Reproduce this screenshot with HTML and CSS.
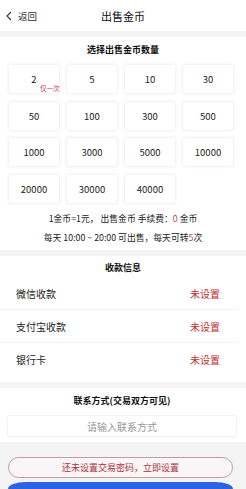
FILE: index.html
```html
<!DOCTYPE html>
<html lang="zh">
<head>
<meta charset="utf-8">
<link rel="stylesheet" href="styles.css">
</head>
<body>
<div class="page">
  <header class="topbar">
    <div class="back">
      <svg class="chev" width="6" height="10" viewBox="0 0 6 10"><path d="M5 1 L1 5 L5 9" fill="none" stroke="#333" stroke-width="1.1"/></svg>
      <span>返回</span>
    </div>
    <div class="title">出售金币</div>
    <div></div>
  </header>

  <section class="card amount">
    <div class="sec-title">选择出售金币数量</div>
    <div class="grid">
      <div class="cell">2<span class="once">仅一次</span></div>
      <div class="cell">5</div>
      <div class="cell">10</div>
      <div class="cell">30</div>
      <div class="cell">50</div>
      <div class="cell">100</div>
      <div class="cell">300</div>
      <div class="cell">500</div>
      <div class="cell">1000</div>
      <div class="cell">3000</div>
      <div class="cell">5000</div>
      <div class="cell">10000</div>
      <div class="cell">20000</div>
      <div class="cell">30000</div>
      <div class="cell">40000</div>
    </div>
    <p class="info first">1金币=1元， 出售金币 手续费：<em>0</em> 金币</p>
    <p class="info">每天 10:00 ~ 20:00 可出售，每天可转<em>5</em>次</p>
  </section>

  <section class="card pay">
    <div class="sec-title">收款信息</div>
    <div class="row"><span>微信收款</span><span class="unset">未设置</span></div>
    <div class="row"><span>支付宝收款</span><span class="unset">未设置</span></div>
    <div class="row"><span>银行卡</span><span class="unset">未设置</span></div>
  </section>

  <section class="card contact">
    <div class="sec-title">联系方式(交易双方可见)</div>
    <div class="input">请输入联系方式</div>
  </section>

  <footer class="actions">
    <div class="btn-outline">还未设置交易密码，立即设置</div>
    <div class="btn-blue"></div>
  </footer>
</div>
</body>
</html>
```

FILE: styles.css
```css
* { box-sizing: border-box; margin: 0; padding: 0; }
html, body { width: 246px; height: 489px; overflow: hidden; }
body {
  background: #f4f4f4;
  font-family: "Noto Sans CJK SC", "Noto Sans", sans-serif;
  color: #222;
}
.page { display: flex; flex-direction: column; }

.topbar {
  height: 31px;
  background: #fff;
  display: grid;
  grid-template-columns: 1fr auto 1fr;
  align-items: center;
}
.back {
  display: flex;
  align-items: center;
  gap: 6px;
  padding-left: 6px;
  font-size: 9.5px;
  color: #333;
}
.title { font-size: 11px; color: #111; }

.card { background: #fff; margin-top: 6px; }
.sec-title {
  text-align: center;
  font-size: 9px;
  font-weight: 700;
  line-height: 18px;
  color: #111;
}
.amount .sec-title { padding: 4px 0 5px; }

.grid {
  display: grid;
  grid-template-columns: repeat(4, 52px);
  grid-auto-rows: 30px;
  column-gap: 6px;
  row-gap: 6.5px;
  padding: 0 12px 0 8px;
}
.cell {
  position: relative;
  display: flex;
  align-items: center;
  justify-content: center;
  border: 1px solid #f3f3f3;
  border-radius: 3px;
  box-shadow: 0 0 3px rgba(0,0,0,0.06);
  font-size: 9.5px;
  color: #222;
}
.once {
  position: absolute;
  left: 31px;
  top: 19px;
  font-size: 6.5px;
  line-height: 8px;
  white-space: nowrap;
  color: #c2405a;
}

.info {
  text-align: center;
  font-size: 8.8px;
  line-height: 19px;
  color: #222;
}
.info.first { margin-top: 5px; }
.info:last-child { margin-bottom: 3.5px; }
.info em { font-style: normal; color: #c24a5c; }

.pay { padding-bottom: 6px; }
.pay .sec-title { padding-top: 3px; }
.row {
  height: 33px;
  display: flex;
  align-items: center;
  justify-content: space-between;
  padding: 0 18px 0 16px;
  margin-right: 8px;
  border-bottom: 1px solid #f3f3f3;
  font-size: 10px;
  color: #222;
}
.row:last-child { border-bottom: none; }
.unset { color: #c0302c; }

.contact { padding: 4px 9px 5px 7px; }
.input {
  margin-top: 5px;
  height: 22px;
  border: 1px solid #f2f2f2;
  border-radius: 2px;
  display: flex;
  align-items: center;
  justify-content: center;
  font-size: 10px;
  color: #999;
}

.actions {
  padding: 15px 13px 0 8px;
  display: flex;
  flex-direction: column;
  gap: 4px;
}
.btn-outline {
  height: 21px;
  border: 1px solid #c99a9a;
  border-radius: 11px;
  background: #f8f6f6;
  display: flex;
  align-items: center;
  justify-content: center;
  font-size: 9px;
  color: #b0303a;
}
.btn-blue {
  height: 7px;
  border-radius: 18px 18px 0 0 / 7px 7px 0 0;
  background: #2c62e6;
}
```
